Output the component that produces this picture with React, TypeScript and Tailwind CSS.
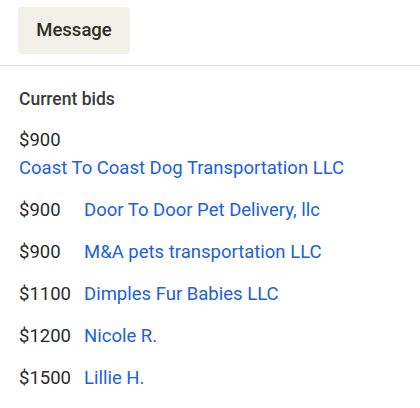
import React from "react";

const bids = [
  { price: "$900", name: "Door To Door Pet Delivery, llc" },
  { price: "$900", name: "M&A pets transportation LLC" },
  { price: "$1100", name: "Dimples Fur Babies LLC" },
  { price: "$1200", name: "Nicole R." },
  { price: "$1500", name: "Lillie H." },
];

export default function App() {
  return (
    <div className="w-[420px] h-[408px] bg-white font-['Roboto',sans-serif] antialiased overflow-hidden">
      <div className="px-[18px] pt-[7px] pb-[11px]">
        <button className="h-[47px] w-[112px] rounded-[4px] bg-[#f1f1ea] text-[18.5px] font-medium text-[#2f2e1f]">
          Message
        </button>
      </div>
      <div className="border-t border-[#dedede]" />
      <section className="px-[19px] pt-[21px]">
        <h2 className="text-[17.5px] font-medium text-[#3a3a3a] leading-[24px]">Current bids</h2>
        <div className="mt-[15px] text-[18.5px] leading-[28px]">
          <div className="text-[#2a2a2a]">$900</div>
          <a className="block text-[#2160dd]">Coast To Coast Dog Transportation LLC</a>
        </div>
        <ul className="mt-[14px] flex flex-col gap-[14px] text-[18.5px] leading-[28px]">
          {bids.map((b, i) => (
            <li key={i} className="flex">
              <span className="w-[65px] shrink-0 text-[#2a2a2a]">{b.price}</span>
              <a className="text-[#2160dd]">{b.name}</a>
            </li>
          ))}
        </ul>
      </section>
    </div>
  );
}
